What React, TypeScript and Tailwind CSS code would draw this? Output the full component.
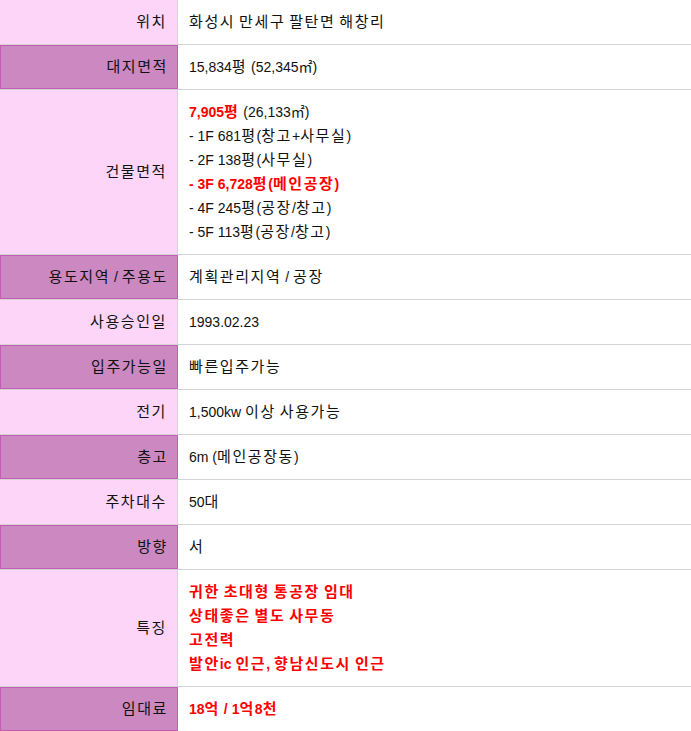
import React from "react";

type Row = {
  label: string;
  dark?: boolean;
  value: React.ReactNode;
};

const red = "text-[#ff0000] font-bold";

// Hangul runs get a little extra width so they read like the original page
function K({ children }: { children: string }) {
  const parts = children.split(/([가-힣]+)/);
  return (
    <>
      {parts.map((p, i) =>
        /[가-힣]/.test(p) ? (
          <span key={i} className="text-[15px] tracking-[1.6px]">
            {p}
          </span>
        ) : (
          <React.Fragment key={i}>{p}</React.Fragment>
        )
      )}
    </>
  );
}

const rows: Row[] = [
  { label: "위치", value: <K>화성시 만세구 팔탄면 해창리</K> },
  { label: "대지면적", dark: true, value: <K>15,834평 (52,345㎡)</K> },
  {
    label: "건물면적",
    value: (
      <>
        <div>
          <span className={red}>
            <K>7,905평</K>
          </span>{" "}
          (26,133㎡)
        </div>
        <div>
          <K>- 1F 681평(창고+사무실)</K>
        </div>
        <div>
          <K>- 2F 138평(사무실)</K>
        </div>
        <div className={red}>
          <K>- 3F 6,728평(메인공장)</K>
        </div>
        <div>
          <K>- 4F 245평(공장/창고)</K>
        </div>
        <div>
          <K>- 5F 113평(공장/창고)</K>
        </div>
      </>
    ),
  },
  { label: "용도지역 / 주용도", dark: true, value: <K>계획관리지역 / 공장</K> },
  { label: "사용승인일", value: "1993.02.23" },
  { label: "입주가능일", dark: true, value: <K>빠른입주가능</K> },
  { label: "전기", value: <K>1,500kw 이상 사용가능</K> },
  { label: "층고", dark: true, value: <K>6m (메인공장동)</K> },
  { label: "주차대수", value: <K>50대</K> },
  { label: "방향", dark: true, value: <K>서</K> },
  {
    label: "특징",
    value: (
      <div className={red}>
        <div>
          <K>귀한 초대형 통공장 임대</K>
        </div>
        <div>
          <K>상태좋은 별도 사무동</K>
        </div>
        <div>
          <K>고전력</K>
        </div>
        <div>
          <K>발안ic 인근, 향남신도시 인근</K>
        </div>
      </div>
    ),
  },
  {
    label: "임대료",
    dark: true,
    value: (
      <span className={red}>
        <K>18억 / 1억8천</K>
      </span>
    ),
  },
];

export default function App() {
  return (
    <div
      className="w-[691px] bg-white text-[14px] leading-[24px] text-[#111]"
      style={{ fontFamily: '"Liberation Sans", "Noto Sans CJK KR", sans-serif' }}
    >
      {rows.map((r, i) => (
        <div key={i} className="grid grid-cols-[178px_1fr] border-b border-[#d4d4d4]">
          <div
            className={
              r.dark
                ? "flex items-center justify-end bg-[#cc88c0] border border-[#c45cb5] pr-[9px] py-[9px]"
                : "flex items-center justify-end bg-[#fdd5f9] border-r border-[#d4d4d4] pr-[10px] py-[10px]"
            }
          >
            <span className="whitespace-nowrap">
              <K>{r.label}</K>
            </span>
          </div>
          <div className="pl-[11px] py-[10px]">{r.value}</div>
        </div>
      ))}
    </div>
  );
}
